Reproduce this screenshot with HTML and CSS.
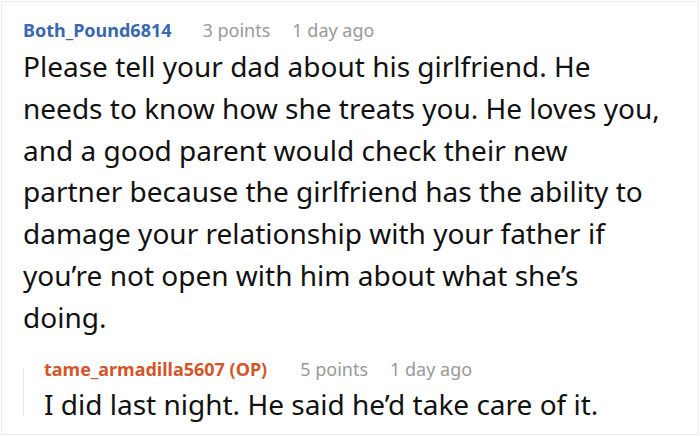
FILE: index.html
```html
<!DOCTYPE html>
<html>
<head>
<meta charset="utf-8">
<link rel="stylesheet" href="styles.css">
</head>
<body>
<div class="card">
  <div class="comment">
    <div class="meta">
      <span class="author">Both_Pound6814</span>
      <span class="info">3 points</span>
      <span class="info">1 day ago</span>
    </div>
    <p class="body">Please tell your dad about his girlfriend. He needs to know how she treats you. He loves you, and a good parent would check their new partner because the girlfriend has the ability to damage your relationship with your father if you’re not open with him about what she’s doing.</p>
    <div class="reply">
      <div class="meta">
        <span class="author op">tame_armadilla5607 (OP)</span>
        <span class="info">5 points</span>
        <span class="info">1 day ago</span>
      </div>
      <p class="body">I did last night. He said he’d take care of it.</p>
    </div>
  </div>
</div>
</body>
</html>
```
FILE: styles.css
```css
html, body {
  margin: 0;
  padding: 0;
  background: #fff;
}
body {
  padding: 1px;
  font-family: "Noto Sans", "Open Sans", sans-serif;
  color: #111;
}
.card {
  box-sizing: border-box;
  width: 698px;
  height: 434px;
  border: 1px solid #ececec;
  padding: 12px 34px 0 21px;
}
.meta {
  display: flex;
  align-items: baseline;
  font-size: 18px;
  line-height: 32px;
}
.author {
  font-weight: 700;
  color: #3a68b0;
  margin-right: 31px;
}
.author.op {
  color: #d3562b;
  margin-right: 33px;
}
.info {
  color: #999;
  margin-right: 22px;
}
.body {
  margin: 0;
  font-size: 28px;
  line-height: 41.8px;
}
.reply {
  margin-top: 15px;
  padding-left: 21px;
  background: linear-gradient(#e4e4e4, #e4e4e4) no-repeat 0 14px / 1px calc(100% - 23px);
}
.reply .meta {
  line-height: 30px;
}
```
